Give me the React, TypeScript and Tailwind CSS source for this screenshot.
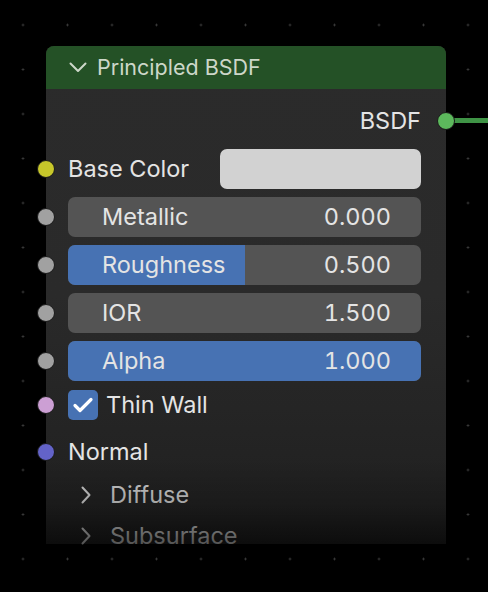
import React from "react";

type SliderProps = {
  label: string;
  value: string;
  fill: number;
};

function Socket({ color }: { color: string }) {
  return (
    <span
      className="absolute left-[-31px] top-1/2 h-[18px] w-[18px] -translate-y-1/2 rounded-full border border-[#1a1a1a]"
      style={{ backgroundColor: color }}
    />
  );
}

function Slider({ label, value, fill }: SliderProps) {
  return (
    <div className="relative h-[40px]">
      <Socket color="#a1a1a1" />
      <div className="relative flex h-full items-center justify-between overflow-hidden rounded-[7px] bg-[#545454] pl-[34px] pr-[30px]">
        <div className="absolute inset-y-0 left-0 bg-[#4772b3]" style={{ width: `${fill}%` }} />
        <span className="relative">{label}</span>
        <span className="relative tabular-nums">{value}</span>
      </div>
    </div>
  );
}

export default function App() {
  return (
    <div
      className="relative h-[592px] w-[488px] overflow-hidden bg-black bg-[radial-gradient(circle,#444444_0.8px,transparent_1.3px)] bg-[size:44.5px_44.5px] bg-[position:0.75px_2.75px] text-[23.5px] text-[#e4e4e4]"
      style={{ fontFamily: "Inter, 'Noto Sans', sans-serif" }}
    >
      {/* outgoing link from the BSDF socket */}
      <div className="absolute left-[452px] top-[118px] h-[5px] w-[40px] bg-[#3f9446]" />

      <div className="relative ml-[46px] mt-[46px] h-[498px] w-[400px]">
        <div className="flex h-full flex-col rounded-t-[8px] bg-gradient-to-b from-[#2b2b2b] via-[#2a2a2a] to-[#1f1f1f]">
          {/* header */}
          <div className="flex h-[43px] shrink-0 items-center gap-[10px] rounded-t-[8px] bg-[#245126] pl-[23px] text-[21.5px] text-[#cdd7c9]">
            <svg width="18" height="11" viewBox="0 0 18 11" fill="none">
              <path d="M1.5 1.5 L9 9 L16.5 1.5" stroke="#cdd7c9" strokeWidth="2" strokeLinecap="round" strokeLinejoin="round" />
            </svg>
            <span className="leading-none">Principled BSDF</span>
          </div>

          <div className="flex flex-col pl-[22px] pr-[25px] pt-[12px]">
            {/* output */}
            <div className="relative flex h-[40px] items-center justify-end">
              <span>BSDF</span>
            </div>

            <div className="mt-[8px] flex flex-col gap-[8px]">
              <div className="relative flex h-[40px] items-center justify-between">
                <Socket color="#c7c72a" />
                <span>Base Color</span>
                <div className="h-full w-[201px] rounded-[7px] bg-[#d2d2d2]" />
              </div>
              <Slider label="Metallic" value="0.000" fill={0} />
              <Slider label="Roughness" value="0.500" fill={50} />
              <Slider label="IOR" value="1.500" fill={0} />
              <Slider label="Alpha" value="1.000" fill={100} />
            </div>

            <div className="relative mt-[4px] flex h-[40px] items-center gap-[8px]">
              <Socket color="#cc9fd4" />
              <div className="flex h-[30px] w-[30px] items-center justify-center rounded-[5px] bg-[#4772b3]">
                <svg width="22" height="18" viewBox="0 0 22 18" fill="none">
                  <path d="M3 9.5 L8 14.5 L19 3.5" stroke="#ffffff" strokeWidth="3.2" strokeLinecap="round" strokeLinejoin="round" />
                </svg>
              </div>
              <span>Thin Wall</span>
            </div>

            <div className="relative mt-[7px] flex h-[40px] items-center">
              <Socket color="#6363c8" />
              <span>Normal</span>
            </div>

            <div className="mt-[3px] flex h-[40px] items-center gap-[19px] pl-[13px] text-[#cccccc]">
              <svg width="10" height="18" viewBox="0 0 10 18" fill="none">
                <path d="M1.5 1.5 L8.5 9 L1.5 16.5" stroke="#cccccc" strokeWidth="2" strokeLinecap="round" strokeLinejoin="round" />
              </svg>
              <span>Diffuse</span>
            </div>

            <div className="mt-[1px] flex h-[40px] items-center gap-[19px] pl-[13px] text-[#cccccc]">
              <svg width="10" height="18" viewBox="0 0 10 18" fill="none">
                <path d="M1.5 1.5 L8.5 9 L1.5 16.5" stroke="#cccccc" strokeWidth="2" strokeLinecap="round" strokeLinejoin="round" />
              </svg>
              <span>Subsurface</span>
            </div>
          </div>
        </div>

        {/* output socket on the right edge */}
        <span className="absolute left-[391px] top-[66px] h-[18px] w-[18px] rounded-full border border-[#1a1a1a] bg-[#5cb85c]" />

        {/* lower fade into the canvas */}
        <div className="pointer-events-none absolute inset-x-[-20px] bottom-[-6px] h-[90px] bg-gradient-to-b from-transparent via-[rgba(0,0,0,0.2)] to-[rgba(0,0,0,0.65)]" />
      </div>
    </div>
  );
}
